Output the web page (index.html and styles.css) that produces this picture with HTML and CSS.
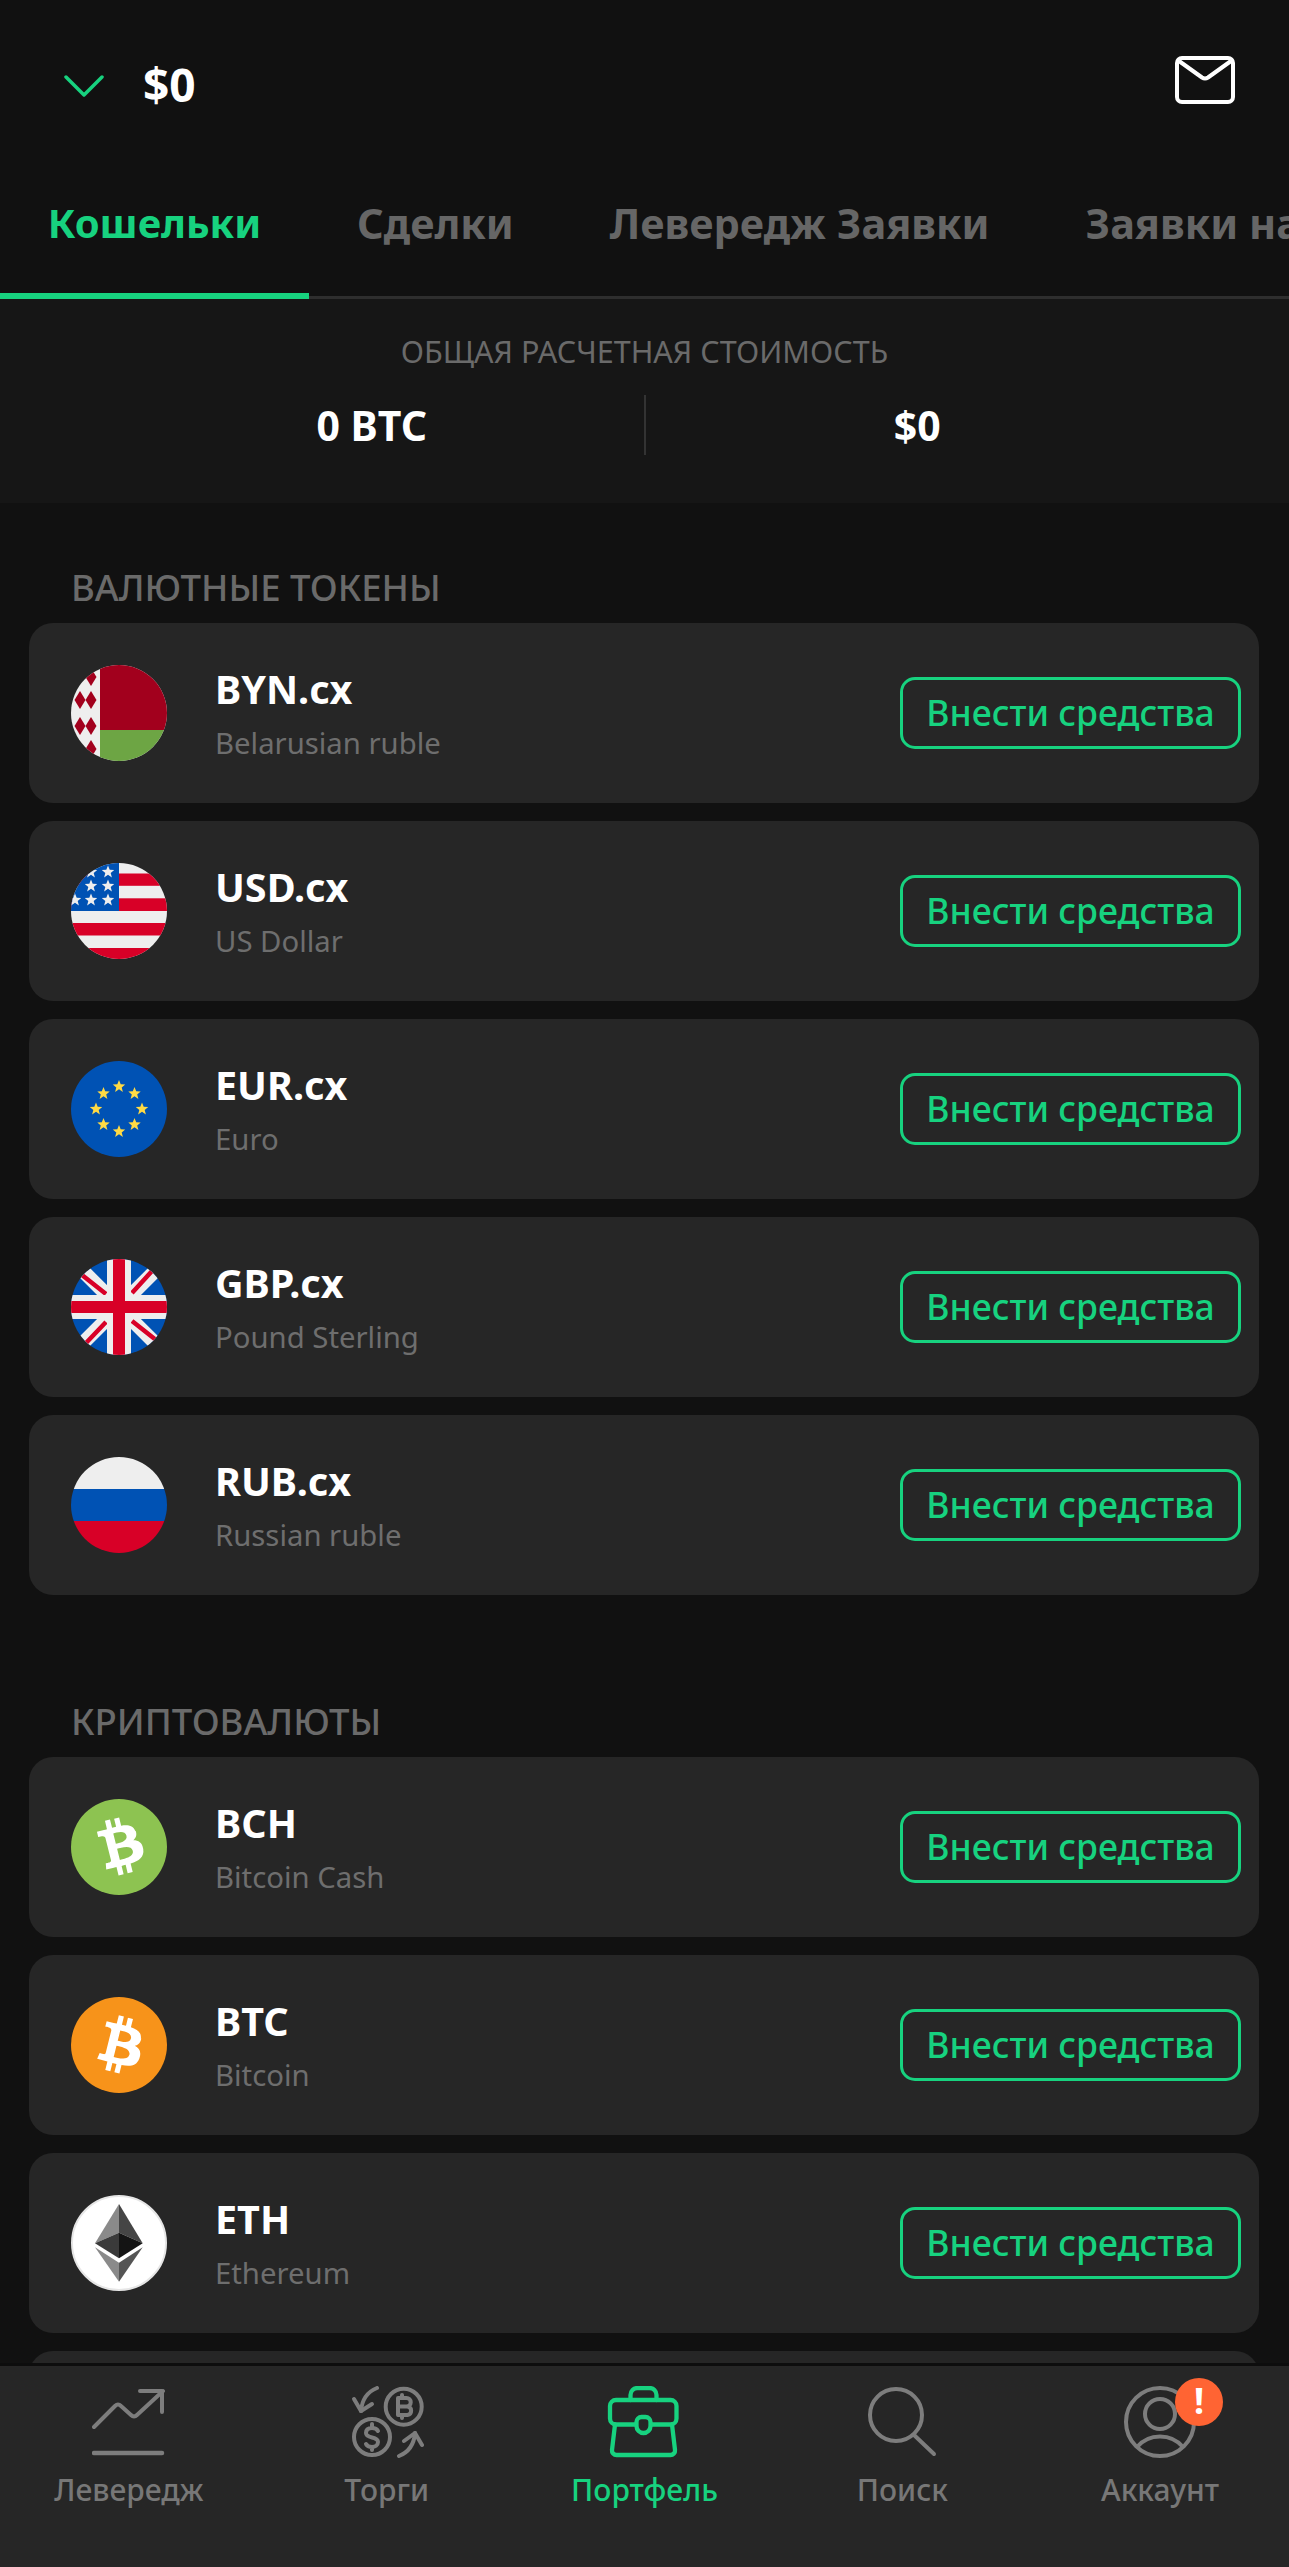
FILE: index.html
```html
<!DOCTYPE html>
<html lang="ru">
<head>
<meta charset="utf-8">
<title>Кошельки</title>
<link rel="stylesheet" href="styles.css">
</head>
<body>
<div class="app">
  <header class="top">
    <div class="balance">
      <svg class="chevron" viewBox="0 0 40 22"><path d="M2 2l18 18L38 2" fill="none" stroke="#17d27f" stroke-width="3.5" stroke-linecap="round" stroke-linejoin="round"/></svg>
      <span class="balance-value">$0</span>
    </div>
    <svg class="mail" viewBox="0 0 60 48"><rect x="2" y="2" width="56" height="44" rx="5" fill="none" stroke="#fff" stroke-width="4"/><path d="M4 5L27 21.500q3 2 6 0L56 5" fill="none" stroke="#fff" stroke-width="4" stroke-linejoin="round"/></svg>
  </header>
  <nav class="tabs">
    <span class="tab tab-active">Кошельки</span>
    <span class="tab">Сделки</span>
    <span class="tab">Левередж Заявки</span>
    <span class="tab">Заявки на вывод</span>
  </nav>
  <section class="summary">
    <div class="summary-title">ОБЩАЯ РАСЧЕТНАЯ СТОИМОСТЬ</div>
    <div class="summary-row">
      <div class="summary-cell">0 BTC</div>
      <div class="summary-cell summary-cell-right">$0</div>
    </div>
  </section>

  <main class="content">
    <h2 class="section-title">ВАЛЮТНЫЕ ТОКЕНЫ</h2>
    <div class="list">
      <div class="card">
        <svg class="coin" viewBox="0 0 96 96"><defs><clipPath id="c1"><circle cx="48" cy="48" r="48"/></clipPath></defs><g clip-path="url(#c1)"><rect width="96" height="96" fill="#eee"/><rect x="29" width="67" height="65" fill="#a2001d"/><rect x="29" y="65" width="67" height="31" fill="#6da544"/><g fill="#a2001d"><path d="M20 3l5.500 9-5.500 9-5.500-9z"/><path d="M9 26l5.500 9-5.500 9-5.500-9z"/><path d="M20 26l5.500 9-5.500 9-5.500-9z"/><path d="M9 52l5.500 9-5.500 9-5.500-9z"/><path d="M20 52l5.500 9-5.500 9-5.500-9z"/><path d="M20 75l5.500 9-5.500 9-5.500-9z"/></g></g></svg>
        <div class="info"><div class="name">BYN.cx</div><div class="sub">Belarusian ruble</div></div>
        <button class="deposit">Внести средства</button>
      </div>
      <div class="card">
        <svg class="coin" viewBox="0 0 96 96"><defs><clipPath id="c2"><circle cx="48" cy="48" r="48"/></clipPath><path id="st" d="M0-6.500l1.700 4.300 4.500.2-3.500 2.900 1.200 4.500L0 2.800l-3.900 2.600 1.200-4.500-3.500-2.900 4.500-.2z" fill="#eee"/></defs><g clip-path="url(#c2)"><rect width="96" height="96" fill="#eee"/><g fill="#d80027"><rect y="10.500" width="96" height="12.300"/><rect y="35.300" width="96" height="12.700"/><rect y="60" width="96" height="12.500"/><rect y="85" width="96" height="11"/></g><rect width="48" height="48" fill="#0052b4"/><use href="#st" x="37" y="9"/><use href="#st" x="20" y="9"/><use href="#st" x="37" y="23"/><use href="#st" x="20" y="23"/><use href="#st" x="37" y="37"/><use href="#st" x="20" y="37"/><use href="#st" x="4" y="37"/></g></svg>
        <div class="info"><div class="name">USD.cx</div><div class="sub">US Dollar</div></div>
        <button class="deposit">Внести средства</button>
      </div>
      <div class="card">
        <svg class="coin" viewBox="0 0 96 96"><defs><path id="sy" d="M0-6.500l1.700 4.300 4.500.2-3.500 2.900 1.200 4.500L0 2.800l-3.900 2.600 1.200-4.500-3.500-2.900 4.500-.2z" fill="#ffda44"/></defs><circle cx="48" cy="48" r="48" fill="#0052b4"/><use href="#sy" x="48" y="25.500"/><use href="#sy" x="63.500" y="32.500"/><use href="#sy" x="71" y="48"/><use href="#sy" x="63.500" y="63.500"/><use href="#sy" x="48" y="70.500"/><use href="#sy" x="32.500" y="63.500"/><use href="#sy" x="25" y="48"/><use href="#sy" x="32.500" y="32.500"/></svg>
        <div class="info"><div class="name">EUR.cx</div><div class="sub">Euro</div></div>
        <button class="deposit">Внести средства</button>
      </div>
      <div class="card">
        <svg class="coin" viewBox="0 0 96 96"><defs><clipPath id="c4"><circle cx="48" cy="48" r="48"/></clipPath></defs><g clip-path="url(#c4)"><rect width="96" height="96" fill="#0052b4"/><path d="M8 8l80 80M88 8L8 88" stroke="#eee" stroke-width="14"/><path d="M11 16l24 19M61 34l20-22M15 84l20-21M61 62l24 19" stroke="#d80027" stroke-width="4.500"/><rect x="36" width="24" height="96" fill="#eee"/><rect y="36" width="96" height="24" fill="#eee"/><rect x="42" width="12" height="96" fill="#d80027"/><rect y="42" width="96" height="12" fill="#d80027"/></g></svg>
        <div class="info"><div class="name">GBP.cx</div><div class="sub">Pound Sterling</div></div>
        <button class="deposit">Внести средства</button>
      </div>
      <div class="card">
        <svg class="coin" viewBox="0 0 96 96"><defs><clipPath id="c5"><circle cx="48" cy="48" r="48"/></clipPath></defs><g clip-path="url(#c5)"><rect width="96" height="32" fill="#eee"/><rect y="32" width="96" height="32" fill="#0052b4"/><rect y="64" width="96" height="32" fill="#d80027"/></g></svg>
        <div class="info"><div class="name">RUB.cx</div><div class="sub">Russian ruble</div></div>
        <button class="deposit">Внести средства</button>
      </div>
    </div>

    <h2 class="section-title section-title-next">КРИПТОВАЛЮТЫ</h2>
    <div class="list">
      <div class="card">
        <svg class="coin" viewBox="0 0 96 96"><defs><path id="btc" fill-rule="evenodd" fill="#fff" d="M46.100 27.400c.6-4.300-2.600-6.600-7.100-8.100l1.500-5.900-3.600-.9-1.400 5.700c-.9-.2-1.900-.5-2.900-.7l1.400-5.800-3.600-.9-1.500 5.900c-.8-.2-1.500-.3-2.200-.5l-5-1.200-1 3.800s2.700.6 2.600.7c1.500.4 1.700 1.300 1.700 2.100l-4 16.100c-.2.400-.6 1.100-1.700.8 0 .1-2.600-.7-2.600-.7l-1.800 4.100 4.700 1.200c.9.200 1.700.4 2.600.7l-1.500 6 3.600.9 1.500-5.900c1 .3 1.900.5 2.900.7l-1.500 5.900 3.600.9 1.500-6c6.200 1.200 10.800.7 12.800-4.900 1.600-4.500-.1-7.100-3.300-8.800 2.400-.5 4.200-2.100 4.600-5.200zm-8.200 11.600c-1.100 4.500-8.700 2.100-11.200 1.500l2-8c2.500.6 10.400 1.800 9.200 6.500zm1.100-11.600c-1 4.100-7.300 2-9.400 1.500l1.800-7.300c2.100.5 8.700 1.500 7.600 5.800z"/></defs><circle cx="48" cy="48" r="48" fill="#8dc351"/><use href="#btc" transform="rotate(-28 48 48) translate(48 48) scale(1.400) translate(-30.500 -32)"/></svg>
        <div class="info"><div class="name">BCH</div><div class="sub">Bitcoin Cash</div></div>
        <button class="deposit">Внести средства</button>
      </div>
      <div class="card">
        <svg class="coin" viewBox="0 0 96 96"><circle cx="48" cy="48" r="48" fill="#f7931a"/><use href="#btc" transform="translate(48 48) scale(1.400) translate(-30.500 -32)"/></svg>
        <div class="info"><div class="name">BTC</div><div class="sub">Bitcoin</div></div>
        <button class="deposit">Внести средства</button>
      </div>
      <div class="card">
        <svg class="coin" viewBox="0 0 96 96"><circle cx="48" cy="48" r="47" fill="#fff" stroke="#e6e6e6" stroke-width="2"/><path d="M48 9L24 48.300 48 37.700z" fill="#8a8a8a"/><path d="M48 9l23.700 39.300L48 37.700z" fill="#454545"/><path d="M24 48.300L48 63.300V37.700z" fill="#3a3a3a"/><path d="M71.700 48.300L48 63.300V37.700z" fill="#141414"/><path d="M24 52.300L48 86.700v-19z" fill="#8a8a8a"/><path d="M71.700 52.300L48 86.700v-19z" fill="#555"/></svg>
        <div class="info"><div class="name">ETH</div><div class="sub">Ethereum</div></div>
        <button class="deposit">Внести средства</button>
      </div>
      <div class="card"></div>
    </div>
  </main>

  <footer class="bottom-nav">
    <div class="nav-item">
      <svg class="nav-icon" viewBox="0 0 74 72" fill="none" stroke="#7d7d7d" stroke-width="4" stroke-linecap="round" stroke-linejoin="round"><path d="M2 41L23 20q3-3 6 0l10 9q3 3 6 0L71 5"/><path d="M48 5h22v21"/><path d="M2 67h68" stroke-width="4.500"/></svg>
      <span class="nav-label">Левередж</span>
    </div>
    <div class="nav-item">
      <svg class="nav-icon" viewBox="0 0 74 72" fill="none" stroke="#7d7d7d" stroke-width="4" stroke-linecap="round" stroke-linejoin="round"><circle cx="53.700" cy="20.700" r="18"/><circle cx="22" cy="51" r="18"/><path d="M48 12h8.500a4.200 4.200 0 0 1 0 8.500H48zm0 8.500h9.500a4.300 4.300 0 0 1 0 8.500H48zM52 9v3M52 29v3"/><path d="M28 45c-1-2-3-3-6-3-4 0-6 2-6 5 0 6 12 3 12 9 0 3-3 5-6 5-3 0-5-1-6-3M22 38v4M22 61v3"/><path d="M27 2C17 6 12 13 11 25"/><path d="M4 13l7 12 11-7"/><path d="M49 70c10-4 15-11 16-23"/><path d="M72 59l-7-12-11 8"/></svg>
      <span class="nav-label">Торги</span>
    </div>
    <div class="nav-item nav-item-active">
      <svg class="nav-icon" viewBox="0 0 74 72" fill="none" stroke="#17d27f" stroke-width="4.300" stroke-linecap="round" stroke-linejoin="round"><path d="M23.500 14V9a7 7 0 0 1 7-7h12a7 7 0 0 1 7 7v5"/><rect x="3" y="14" width="66.500" height="24.500" rx="6"/><path d="M8 38.500L5 64a4.500 4.500 0 0 0 4.500 5h54a4.500 4.500 0 0 0 4.500-5l-3-25.500"/><path d="M29.500 36a5 5 0 0 1 5-5h4a5 5 0 0 1 5 5v4a7 7 0 0 1-14 0z" fill="#262626"/></svg>
      <span class="nav-label">Портфель</span>
    </div>
    <div class="nav-item">
      <svg class="nav-icon" viewBox="0 0 74 72" fill="none" stroke="#7d7d7d" stroke-width="4" stroke-linecap="round"><circle cx="31" cy="29" r="26"/><path d="M49 49l20 19"/></svg>
      <span class="nav-label">Поиск</span>
    </div>
    <div class="nav-item">
      <span class="nav-icon-wrap">
        <svg class="nav-icon" viewBox="0 0 74 72" fill="none" stroke="#7d7d7d" stroke-width="4"><circle cx="37" cy="36" r="34"/><circle cx="37" cy="28" r="15"/><path d="M14 61c12-14 34-14 46 0"/></svg>
        <span class="badge">!</span>
      </span>
      <span class="nav-label">Аккаунт</span>
    </div>
  </footer>
</div>
</body>
</html>
```
FILE: styles.css
```css
* { box-sizing: border-box; }
html, body { margin: 0; padding: 0; background: #111; }
.app {
  position: relative;
  width: 1289px;
  height: 2567px;
  overflow: hidden;
  background: #111;
  color: #fff;
  font-family: "Noto Sans", "Open Sans", sans-serif;
}
.top {
  height: 167px;
  padding: 56px 54px 0 64px;
  display: flex;
  justify-content: space-between;
  align-items: flex-start;
}
.balance { display: flex; align-items: center; gap: 39px; height: 48px; margin-top: 4px; }
.chevron { width: 40px; height: 22px; margin-top: 4px; }
.balance-value { font-size: 46px; font-weight: 700; line-height: 48px; }
.mail { width: 60px; height: 48px; }
.tabs {
  display: flex;
  height: 132px;
  white-space: nowrap;
  box-shadow: inset 0 -3px 0 #2e2e2e;
  overflow: hidden;
}
.tab {
  flex: none;
  height: 132px;
  padding: 30px 48px 0;
  font-size: 41.5px;
  line-height: 52px;
  font-weight: 700;
  color: #666;
}
.tab-active {
  width: 309px;
  padding: 30px 0 0;
  text-align: center;
  font-size: 40px;
  color: #17d27f;
  border-bottom: 6px solid #17d27f;
}
.summary {
  height: 204px;
  background: #161616;
  padding-top: 34px;
}
.summary-title {
  text-align: center;
  font-size: 30.5px;
  line-height: 36px;
  color: #6a6a6a;
}
.summary-row { display: flex; margin-top: 26px; height: 60px; padding: 0 100px; }
.summary-cell {
  flex: 1;
  text-align: center;
  font-size: 41px;
  font-weight: 700;
  line-height: 60px;
}
.summary-cell-right { border-left: 2px solid #333; }
.content { padding: 0 30px 0 29px; }
.section-title {
  margin: 0;
  padding: 62px 0 0 42px;
  height: 120px;
  font-size: 36.5px;
  line-height: 44px;
  font-weight: 500;
  color: #6a6a6a;
}
.section-title-next { height: 162px; padding-top: 104px; }
.list { display: flex; flex-direction: column; gap: 18px; }
.card {
  height: 180px;
  flex: none;
  background: #262626;
  border-radius: 24px;
  display: flex;
  align-items: center;
  padding: 0 18px 0 42px;
}
.coin { width: 96px; height: 96px; flex: none; }
.info { flex: 1; margin-left: 48px; padding-top: 2px; }
.name { font-size: 39.5px; line-height: 48px; font-weight: 700; color: #fff; }
.sub { font-size: 29.3px; line-height: 40px; color: #6e6e6e; margin-top: 10px; }
.deposit {
  width: 341px;
  height: 72px;
  padding: 0 0 2px;
  border: 3px solid #17d27f;
  border-radius: 15px;
  background: transparent;
  color: #17d27f;
  font-family: inherit;
  font-size: 35.5px;
  font-weight: 500;
}
.bottom-nav {
  position: absolute;
  left: 0;
  right: 0;
  bottom: 0;
  height: 201px;
  background: #262626;
  box-shadow: 0 -3px 0 #0d0d0d;
  display: flex;
  padding-top: 20px;
}
.nav-item {
  flex: 1;
  display: flex;
  flex-direction: column;
  align-items: center;
  gap: 12px;
  color: #777;
}
.nav-item-active { color: #17d27f; }
.nav-icon-wrap { position: relative; display: block; height: 72px; }
.nav-icon { width: 74px; height: 72px; display: block; }
.nav-label { font-size: 30px; line-height: 40px; font-weight: 500; }
.badge {
  position: absolute;
  left: 52px;
  top: -8px;
  width: 48px;
  height: 48px;
  border-radius: 50%;
  background: #ff6433;
  color: #fff;
  font-size: 36px;
  font-weight: 700;
  line-height: 46px;
  text-align: center;
}
```
